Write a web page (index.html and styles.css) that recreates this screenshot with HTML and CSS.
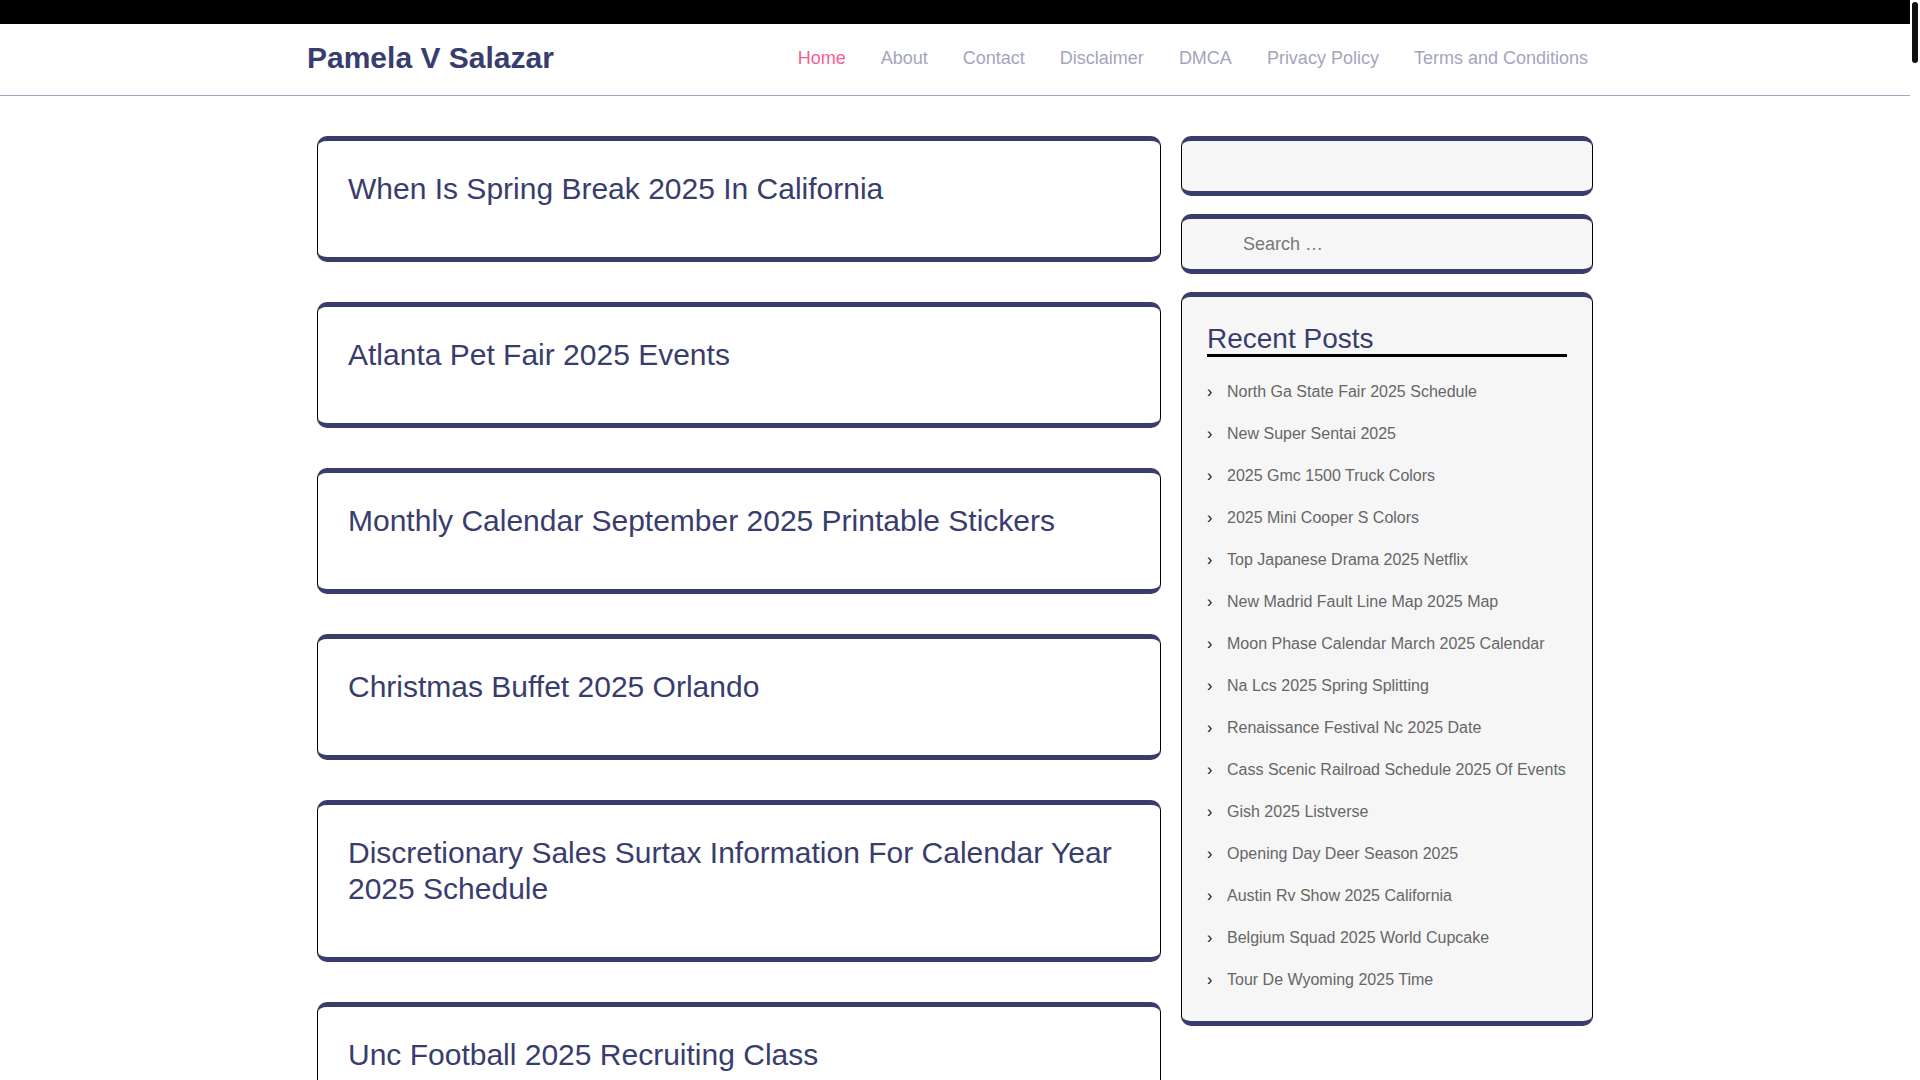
FILE: index.html
```html
<!DOCTYPE html>
<html lang="en">
  <head>
    <meta charset="UTF-8" />
    <meta name="viewport" content="width=device-width, initial-scale=1.0" />
    <title>Pamela V Salazar</title>
    <link rel="stylesheet" href="styles.css">
  </head>
  <body>
    <div class="top-bar"></div>

    <header class="site-header">
      <div class="header-inner">
        <a class="site-title" href="#">Pamela V Salazar</a>
        <nav class="main-nav">
          <a class="current" href="#">Home</a>
          <a href="#">About</a>
          <a href="#">Contact</a>
          <a href="#">Disclaimer</a>
          <a href="#">DMCA</a>
          <a href="#">Privacy Policy</a>
          <a href="#">Terms and Conditions</a>
        </nav>
      </div>
    </header>

    <div class="site-content">
      <main class="post-list">
        <article class="post-card">
          <h2 class="post-title"><a href="#">When Is Spring Break 2025 In California</a></h2>
        </article>
        <article class="post-card">
          <h2 class="post-title"><a href="#">Atlanta Pet Fair 2025 Events</a></h2>
        </article>
        <article class="post-card">
          <h2 class="post-title"><a href="#">Monthly Calendar September 2025 Printable Stickers</a></h2>
        </article>
        <article class="post-card">
          <h2 class="post-title"><a href="#">Christmas Buffet 2025 Orlando</a></h2>
        </article>
        <article class="post-card">
          <h2 class="post-title"><a href="#">Discretionary Sales Surtax Information For Calendar Year 2025 Schedule</a></h2>
        </article>
        <article class="post-card">
          <h2 class="post-title"><a href="#">Unc Football 2025 Recruiting Class</a></h2>
        </article>
        <article class="post-card">
          <h2 class="post-title"><a href="#">North Ga State Fair 2025 Schedule</a></h2>
        </article>
        <article class="post-card">
          <h2 class="post-title"><a href="#">New Super Sentai 2025</a></h2>
        </article>
      </main>

      <aside class="sidebar">
        <section class="widget widget-empty"></section>

        <section class="widget widget-search">
          <input class="search-field" type="search" placeholder="Search &hellip;">
        </section>

        <section class="widget widget-recent">
          <h3 class="widget-title">Recent Posts</h3>
          <ul class="recent-posts">
            <li><a href="#">North Ga State Fair 2025 Schedule</a></li>
            <li><a href="#">New Super Sentai 2025</a></li>
            <li><a href="#">2025 Gmc 1500 Truck Colors</a></li>
            <li><a href="#">2025 Mini Cooper S Colors</a></li>
            <li><a href="#">Top Japanese Drama 2025 Netflix</a></li>
            <li><a href="#">New Madrid Fault Line Map 2025 Map</a></li>
            <li><a href="#">Moon Phase Calendar March 2025 Calendar</a></li>
            <li><a href="#">Na Lcs 2025 Spring Splitting</a></li>
            <li><a href="#">Renaissance Festival Nc 2025 Date</a></li>
            <li><a href="#">Cass Scenic Railroad Schedule 2025 Of Events</a></li>
            <li><a href="#">Gish 2025 Listverse</a></li>
            <li><a href="#">Opening Day Deer Season 2025</a></li>
            <li><a href="#">Austin Rv Show 2025 California</a></li>
            <li><a href="#">Belgium Squad 2025 World Cupcake</a></li>
            <li><a href="#">Tour De Wyoming 2025 Time</a></li>
          </ul>
        </section>
      </aside>
    </div>

    <footer class="site-footer">Copyright &copy; 2025 Pamela V Salazar</footer>

    <!-- Slim scroll indicator on the right edge -->
    <div class="scroll-track"><div class="scroll-thumb"></div></div>
  </body>
</html>
```

FILE: styles.css
```css
body {
    margin: 0 10px 0 0;
    background-color: #fff;
    font-family: "Liberation Sans", Arial, sans-serif;
}

a {
    text-decoration: none;
}

.top-bar {
    height: 24px;
    background-color: #000;
}

/* Header */
.site-header {
    border-bottom: 1px solid #a3a5bf;
}

.header-inner {
    box-sizing: border-box;
    width: 1296px;
    margin: 0 auto;
    padding: 16px 15px 19px 0;
    display: flex;
    align-items: center;
    justify-content: space-between;
}

.site-title {
    font-size: 30px;
    line-height: 36px;
    font-weight: bold;
    color: #393d6d;
}

.main-nav {
    display: flex;
    gap: 35px;
}

.main-nav a {
    font-size: 18px;
    color: #a3a5bf;
}

.main-nav a.current {
    color: #f7608c;
}

/* Content */
.site-content {
    width: 1276px;
    margin: 40px auto;
    display: grid;
    grid-template-columns: 844px 412px;
    gap: 20px;
    align-items: start;
}

.post-card,
.widget {
    border-style: solid;
    border-width: 5px 1px;
    border-color: #393d6d #000;
    border-radius: 10px;
}

.post-card {
    padding: 30px;
    margin-bottom: 40px;
    background-color: #fff;
}

.post-title {
    margin: 0 0 20px;
    font-size: 30px;
    line-height: 36px;
    font-weight: normal;
}

.post-title a {
    color: #393d6d;
}

/* Sidebar */
.widget {
    margin-bottom: 18px;
    background-color: #f6f6f6;
}

.widget-empty {
    height: 50px;
}

.search-field {
    box-sizing: border-box;
    display: block;
    width: 100%;
    height: 50px;
    padding: 0 0 0 61px;
    border: none;
    background: transparent;
    font-family: inherit;
    font-size: 18px;
    color: #555;
    outline: none;
}

.search-field::placeholder {
    color: #777;
}

.widget-recent {
    padding: 26px 25px 20px;
}

.widget-title {
    margin: 0;
    font-size: 28px;
    line-height: 31px;
    font-weight: normal;
    color: #393d6d;
    border-bottom: 3px solid #000;
}

.recent-posts {
    list-style: none;
    margin: 14px 0 0;
    padding: 0;
}

.recent-posts li {
    display: flex;
    padding: 10px 0;
    font-size: 16px;
    line-height: 22px;
}

.recent-posts li::before {
    content: "\203A";
    width: 20px;
    flex-shrink: 0;
    color: #111;
}

.recent-posts a {
    color: #666;
}

.site-footer {
    padding: 20px 0;
    text-align: center;
    font-size: 16px;
    color: #666;
    border-top: 1px solid #a3a5bf;
}

/* Scroll indicator */
.scroll-track {
    position: fixed;
    top: 0;
    right: 0;
    width: 10px;
    height: 100%;
    background-color: #fff;
}

.scroll-thumb {
    margin: 2px 2px 0;
    height: 61px;
    background-color: #111;
    border-radius: 3px;
}
```
